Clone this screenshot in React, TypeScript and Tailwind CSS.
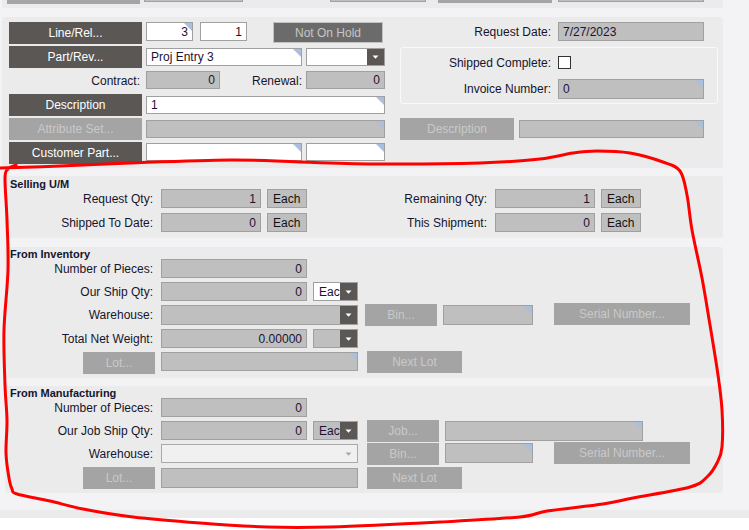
import React from "react";

type BtnKind = "dark" | "dis" | "hold" | "each";

function Btn({ label, kind, cls = "" }: { label: string; kind: BtnKind; cls?: string }) {
  const k =
    kind === "dark"
      ? "bg-[#5a5755] text-white justify-center"
      : kind === "dis"
      ? "bg-[#a4a4a4] text-[#c9c9c9] justify-center"
      : kind === "hold"
      ? "bg-[#6b6b6b] text-[#c6c6c6] border border-[#c2c2c2] justify-center"
      : "bg-[#bfbfbf] text-[#111111] border border-[#a0a0a0] justify-start pl-[5px]";
  return (
    <div
      className={`shrink-0 flex items-center text-[12px] leading-none whitespace-nowrap ${k} ${cls}`}
    >
      {label}
    </div>
  );
}

function Tri({ light = false }: { light?: boolean }) {
  return (
    <svg width="7" height="4" viewBox="0 0 7 4">
      <path d="M0.5 0.5h6L3.5 3.8z" fill={light ? "#b59fad" : "#ffffff"} />
    </svg>
  );
}

function Field({
  cls = "",
  v = "",
  right = false,
  ro = false,
  corner = false,
  dd = false,
  light = false,
}: {
  cls?: string;
  v?: string;
  right?: boolean;
  ro?: boolean;
  corner?: boolean;
  dd?: boolean;
  light?: boolean;
}) {
  const bg = light
    ? "bg-[#f0f0f0] border-[#a9a9a9]"
    : ro
    ? "bg-[#bfbfbf] border-[#a0a0a0]"
    : "bg-white border-[#a0a0a0]";
  return (
    <div
      className={`relative shrink-0 flex items-center border overflow-hidden text-[12px] text-[#1d1233] leading-none ${bg} ${
        right ? "justify-end pr-[4px]" : "justify-start pl-[4px]"
      } ${cls}`}
    >
      <span className="whitespace-nowrap">{v}</span>
      {corner && (
        <span className="absolute top-0 right-0 w-[8px] h-[8px] bg-[#a9bfdd] [clip-path:polygon(0_0,100%_0,100%_100%)]" />
      )}
      {dd && (
        <span className="absolute top-0 right-0 bottom-0 w-[17px] bg-[#5a5755] flex items-center justify-center">
          <Tri />
        </span>
      )}
      {light && (
        <span className="absolute top-0 right-0 bottom-0 w-[17px] flex items-center justify-center">
          <Tri light />
        </span>
      )}
    </div>
  );
}

function Lbl({ t, cls = "" }: { t: string; cls?: string }) {
  return (
    <div
      className={`shrink-0 self-center text-right text-[12px] leading-none text-[#15152b] whitespace-nowrap ${cls}`}
    >
      {t}
    </div>
  );
}

function Title({ t }: { t: string }) {
  return (
    <div className="pl-[5px] pt-[1px] h-[12px] text-[11px] font-bold leading-[12px] text-[#15152b] whitespace-nowrap">
      {t}
    </div>
  );
}

function smooth(pts: number[][]) {
  let d = `M${pts[0][0]} ${pts[0][1]}`;
  for (let i = 0; i < pts.length - 1; i++) {
    const p0 = pts[i - 1] || pts[i];
    const p1 = pts[i];
    const p2 = pts[i + 1];
    const p3 = pts[i + 2] || p2;
    const c1x = p1[0] + (p2[0] - p0[0]) / 6;
    const c1y = p1[1] + (p2[1] - p0[1]) / 6;
    const c2x = p2[0] - (p3[0] - p1[0]) / 6;
    const c2y = p2[1] - (p3[1] - p1[1]) / 6;
    d += ` C${c1x.toFixed(1)} ${c1y.toFixed(1)} ${c2x.toFixed(1)} ${c2y.toFixed(1)} ${p2[0]} ${p2[1]}`;
  }
  return d;
}

const redPts = [
  [0, 168], [60, 166], [130, 163], [230, 160], [300, 162], [380, 164], [480, 163], [540, 159],
  [573, 153], [597, 151], [630, 153], [663, 162], [680, 171], [687, 195], [692, 230], [702, 278],
  [710, 325], [718, 375], [722, 410], [722, 447], [717, 463], [707, 477], [690, 487], [633, 498],
  [603, 504], [547, 511], [520, 517], [440, 522], [330, 527], [267, 527], [200, 523], [133, 517],
  [83, 509], [50, 501], [17, 494], [12, 489], [9, 478], [6, 453], [7, 420], [5, 385], [4, 330],
  [8, 270], [7, 220], [5, 178], [8, 169], [16, 165],
];

export default function App() {
  return (
    <div className="relative w-[749px] h-[530px] overflow-hidden bg-white font-['Liberation_Sans',Arial,sans-serif]">
      <div className="h-[510px] bg-[#f3f3f5] flex flex-col">
        {/* top strip (cut off) */}
        <div className="ml-[2px] w-[721px] h-[8px] shrink-0 bg-[#ebebeb] rounded-b-[3px] flex items-start overflow-hidden">
          <div className="ml-[5px] w-[133px] h-[4px] bg-[#a4a4a4]" />
          <div className="ml-[4px] w-[99px] h-[2px] bg-[#bfbfbf] border-x border-b border-[#a0a0a0]" />
          <div className="ml-[87px] w-[96px] h-[2px] bg-[#bfbfbf] border-x border-b border-[#a0a0a0]" />
          <div className="ml-[12px] w-[114px] h-[3px] bg-[#a4a4a4]" />
          <div className="ml-[6px] w-[146px] h-[2px] bg-[#bfbfbf] border-x border-b border-[#a0a0a0]" />
        </div>

        {/* main panel */}
        <div className="mt-[9px] ml-[2px] w-[721px] h-[151px] shrink-0 bg-[#ebebeb] rounded-[3px] flex pt-[5px] pl-[7px]">
          <div className="flex flex-col gap-[2px] w-[376px]">
            <div className="flex items-start h-[22px]">
              <Btn label="Line/Rel..." kind="dark" cls="w-[133px] h-[22px]" />
              <Field cls="ml-[4px] w-[47px] h-[19px]" v="3" right corner />
              <Field cls="ml-[7px] w-[47px] h-[19px]" v="1" right />
              <Btn label="Not On Hold" kind="hold" cls="ml-[26px] w-[110px] h-[21px]" />
            </div>
            <div className="flex items-start h-[22px]">
              <Btn label="Part/Rev..." kind="dark" cls="w-[133px] h-[22px]" />
              <Field cls="ml-[4px] mt-[2px] w-[156px] h-[18px]" v="Proj Entry 3" corner />
              <Field cls="ml-[4px] mt-[2px] w-[79px] h-[18px]" dd />
            </div>
            <div className="flex items-start h-[22px]">
              <Lbl t="Contract:" cls="w-[133px] pr-[2px]" />
              <Field cls="ml-[4px] mt-[1px] w-[74px] h-[18px]" v="0" right ro />
              <Lbl t="Renewal:" cls="w-[82px]" />
              <Field cls="ml-[4px] mt-[1px] w-[79px] h-[18px]" v="0" right ro />
            </div>
            <div className="flex items-start h-[22px]">
              <Btn label="Description" kind="dark" cls="w-[133px] h-[22px]" />
              <Field cls="ml-[4px] mt-[2px] w-[239px] h-[18px] !items-start pt-[2px]" v="1" corner />
            </div>
            <div className="flex items-start h-[22px]">
              <Btn label="Attribute Set..." kind="dis" cls="w-[133px] h-[22px]" />
              <Field cls="ml-[4px] mt-[2px] w-[239px] h-[18px]" ro corner />
            </div>
            <div className="flex items-start h-[22px]">
              <Btn label="Customer Part..." kind="dark" cls="w-[133px] h-[22px]" />
              <Field cls="ml-[4px] mt-[1px] w-[156px] h-[18px]" corner />
              <Field cls="ml-[4px] mt-[1px] w-[79px] h-[18px]" corner />
            </div>
          </div>

          <div className="ml-[15px] flex flex-col">
            <div className="flex items-start h-[19px]">
              <Lbl t="Request Date:" cls="w-[151px]" />
              <Field cls="ml-[7px] w-[146px] h-[19px]" v="7/27/2023" ro />
            </div>
            <div className="mt-[6px] w-[318px] h-[57px] border border-[#f9f9f9] rounded-[3px] pt-[8px] flex flex-col">
              <div className="flex items-center h-[13px]">
                <Lbl t="Shipped Complete:" cls="w-[150px]" />
                <div className="ml-[7px] w-[13px] h-[13px] bg-white border border-[#333333]" />
              </div>
              <div className="mt-[10px] flex items-start h-[20px]">
                <Lbl t="Invoice Number:" cls="w-[150px]" />
                <Field cls="ml-[7px] w-[146px] h-[20px]" v="0" ro corner />
              </div>
            </div>
            <div className="mt-[14px] flex items-start h-[22px]">
              <Btn label="Description" kind="dis" cls="w-[114px] h-[22px]" />
              <Field cls="ml-[5px] mt-[2px] w-[185px] h-[18px]" ro corner />
            </div>
          </div>
        </div>

        {/* Selling U/M */}
        <div className="mt-[8px] ml-[5px] w-[718px] h-[62px] shrink-0 bg-[#ebebeb] rounded-[3px] flex flex-col">
          <div className="pt-[1px]">
            <Title t="Selling U/M" />
          </div>
          <div className="flex items-start h-[19px]">
            <Lbl t="Request Qty:" cls="w-[148px]" />
            <Field cls="ml-[8px] w-[100px] h-[19px]" v="1" right ro />
            <Btn label="Each" kind="each" cls="ml-[6px] w-[40px] h-[19px]" />
            <Lbl t="Remaining Qty:" cls="w-[180px]" />
            <Field cls="ml-[8px] w-[100px] h-[19px]" v="1" right ro />
            <Btn label="Each" kind="each" cls="ml-[6px] w-[40px] h-[19px]" />
          </div>
          <div className="mt-[5px] flex items-start h-[19px]">
            <Lbl t="Shipped To Date:" cls="w-[148px]" />
            <Field cls="ml-[8px] w-[100px] h-[19px]" v="0" right ro />
            <Btn label="Each" kind="each" cls="ml-[6px] w-[40px] h-[19px]" />
            <Lbl t="This Shipment:" cls="w-[180px]" />
            <Field cls="ml-[8px] w-[100px] h-[19px]" v="0" right ro />
            <Btn label="Each" kind="each" cls="ml-[6px] w-[40px] h-[19px]" />
          </div>
        </div>

        {/* From Inventory */}
        <div className="mt-[9px] ml-[5px] w-[718px] h-[131px] shrink-0 bg-[#ebebeb] rounded-[3px] flex flex-col">
          <Title t="From Inventory" />
          <div className="flex items-start h-[19px]">
            <Lbl t="Number of Pieces:" cls="w-[148px]" />
            <Field cls="ml-[8px] w-[146px] h-[19px]" v="0" right ro />
          </div>
          <div className="mt-[4px] flex items-start h-[19px]">
            <Lbl t="Our Ship Qty:" cls="w-[148px]" />
            <Field cls="ml-[8px] w-[146px] h-[19px]" v="0" right ro />
            <Field cls="ml-[6px] w-[45px] h-[19px] !pl-[5px]" v="Each" dd />
          </div>
          <div className="mt-[4px] flex items-start h-[20px]">
            <Lbl t="Warehouse:" cls="w-[148px]" />
            <Field cls="ml-[8px] w-[197px] h-[20px]" ro dd />
            <Btn label="Bin..." kind="dis" cls="ml-[7px] -mt-[1px] w-[72px] h-[22px]" />
            <Field cls="ml-[6px] w-[90px] h-[20px]" ro corner />
            <Btn label="Serial Number..." kind="dis" cls="ml-[21px] -mt-[2px] w-[136px] h-[22px]" />
          </div>
          <div className="mt-[4px] flex items-start h-[19px]">
            <Lbl t="Total Net Weight:" cls="w-[148px]" />
            <Field cls="ml-[8px] w-[146px] h-[19px]" v="0.00000" right ro />
            <Field cls="ml-[6px] w-[45px] h-[19px]" ro dd />
          </div>
          <div className="mt-[4px] flex items-start h-[19px]">
            <Btn label="Lot..." kind="dis" cls="ml-[78px] w-[72px] h-[22px]" />
            <Field cls="ml-[6px] w-[197px] h-[19px]" ro corner />
            <Btn label="Next Lot" kind="dis" cls="ml-[9px] -mt-[1px] w-[95px] h-[22px]" />
          </div>
        </div>

        {/* From Manufacturing */}
        <div className="mt-[8px] ml-[5px] w-[718px] h-[107px] shrink-0 bg-[#ebebeb] rounded-[3px] flex flex-col">
          <Title t="From Manufacturing" />
          <div className="flex items-start h-[19px]">
            <Lbl t="Number of Pieces:" cls="w-[148px]" />
            <Field cls="ml-[8px] w-[146px] h-[19px]" v="0" right ro />
          </div>
          <div className="mt-[4px] flex items-start h-[19px]">
            <Lbl t="Our Job Ship Qty:" cls="w-[148px]" />
            <Field cls="ml-[8px] w-[146px] h-[19px]" v="0" right ro />
            <Field cls="ml-[6px] w-[45px] h-[19px] !pl-[5px]" v="Each" ro dd />
            <Btn label="Job..." kind="dis" cls="ml-[9px] -mt-[1px] w-[72px] h-[22px]" />
            <Field cls="ml-[6px] w-[198px] h-[20px]" ro corner />
          </div>
          <div className="mt-[4px] flex items-start h-[19px]">
            <Lbl t="Warehouse:" cls="w-[148px]" />
            <Field cls="ml-[8px] w-[197px] h-[19px]" light />
            <Btn label="Bin..." kind="dis" cls="ml-[9px] -mt-[1px] w-[72px] h-[22px]" />
            <Field cls="ml-[6px] -mt-[1px] w-[88px] h-[20px]" ro corner />
            <Btn label="Serial Number..." kind="dis" cls="ml-[21px] -mt-[2px] w-[136px] h-[22px]" />
          </div>
          <div className="mt-[4px] flex items-start h-[19px]">
            <Btn label="Lot..." kind="dis" cls="ml-[78px] w-[72px] h-[22px]" />
            <Field cls="ml-[6px] mt-[1px] w-[197px] h-[20px]" ro />
            <Btn label="Next Lot" kind="dis" cls="ml-[9px] w-[95px] h-[22px]" />
          </div>
        </div>
      </div>
      <div className="h-[8px] bg-[#ebebeb]" />

      {/* hand-drawn red annotation */}
      <svg
        className="absolute inset-0 pointer-events-none"
        width="749"
        height="530"
        viewBox="0 0 749 530"
      >
        <path
          d={smooth(redPts)}
          fill="none"
          stroke="#ff0000"
          strokeWidth="3"
          strokeLinecap="round"
          strokeLinejoin="round"
        />
      </svg>
    </div>
  );
}
